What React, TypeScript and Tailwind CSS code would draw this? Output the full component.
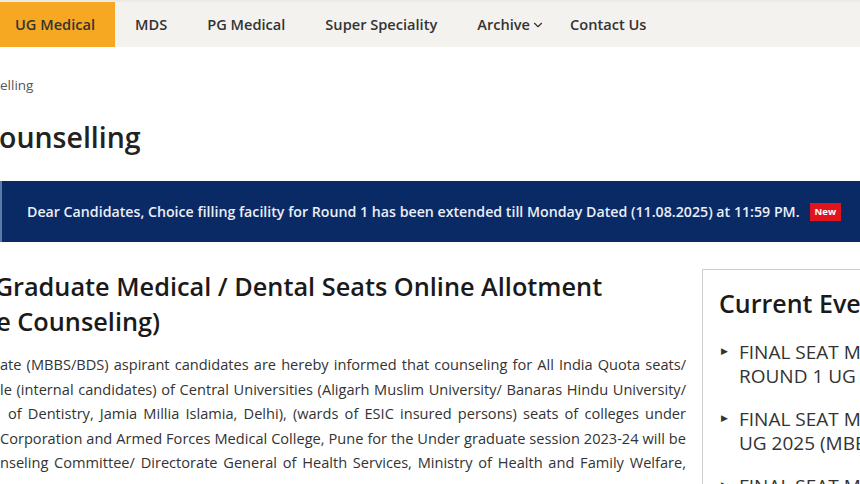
import React from 'react';
import { ChevronDown } from 'lucide-react';

const navItems = ['MDS', 'PG Medical', 'Super Speciality'];

const paraLines = [
  { text: 'ate (MBBS/BDS) aspirant candidates are hereby informed that counseling for All India Quota seats/', pad: '' },
  { text: 'le (internal candidates) of Central Universities (Aligarh Muslim University/ Banaras Hindu University/', pad: '' },
  { text: 'of Dentistry, Jamia Millia Islamia, Delhi), (wards of ESIC insured persons) seats of colleges under', pad: 'pl-[8px]' },
  { text: 'Corporation and Armed Forces Medical College, Pune for the Under graduate session 2023-24 will be', pad: '' },
  { text: 'nseling Committee/ Directorate General of Health Services, Ministry of Health and Family Welfare,', pad: '' },
];

const events = [
  ['FINAL SEAT MATRIX FOR', 'ROUND 1 UG 2025 (MBBS/BDS)'],
  ['FINAL SEAT MATRIX FOR ROUND 2', 'UG 2025 (MBBS/BDS)'],
  ['FINAL SEAT MATRIX FOR ROUND 3', 'UG 2025 (MBBS/BDS)'],
];

export default function App() {
  return (
    <div className="w-[860px] h-[484px] overflow-hidden bg-white font-['Open_Sans',sans-serif] text-[#333]">
      {/* Top navigation */}
      <div className="h-[2px] bg-[#eceae6]" />
      <nav className="flex h-[45px] items-stretch bg-[#f4f2ee] text-[14.6px] font-semibold text-[#333]">
        <a className="flex items-center bg-[#f7a823] pl-[15px] pr-5 whitespace-nowrap">UG Medical</a>
        {navItems.map((item) => (
          <a key={item} className="flex items-center px-5 whitespace-nowrap">{item}</a>
        ))}
        <a className="flex items-center gap-[1px] pl-5 pr-[5px] whitespace-nowrap">
          Archive <ChevronDown size={14} strokeWidth={2} className="mt-[1px]" />
        </a>
        <a className="flex items-center px-5 whitespace-nowrap">Contact Us</a>
      </nav>

      {/* Breadcrumb + title */}
      <div className="mt-[28px] text-[13.5px] leading-[20px] text-[#555] whitespace-nowrap">elling</div>
      <h1 className="mt-[24px] text-[28.5px] leading-[36px] font-semibold text-[#222] whitespace-nowrap -ml-[1px]">ounselling</h1>

      {/* Notice banner */}
      <div className="mt-[26px] flex h-[61px] items-center border-l-2 border-[#5d79a8] bg-[#0a2a66] pl-[25px] whitespace-nowrap">
        <span className="text-[14.2px] font-semibold text-[#e9eef7]">
          Dear Candidates, Choice filling facility for Round 1 has been extended till Monday Dated (11.08.2025) at 11:59 PM.
        </span>
        <span className="ml-[10px] bg-[#e0141c] px-[5px] py-[2px] text-[9.5px] font-bold leading-[14px] text-white">New</span>
      </div>

      {/* Main content */}
      <div className="mt-[27px] flex items-start">
        <div className="w-[686px] shrink-0">
          <h2 className="text-[25.3px] leading-[35px] font-semibold text-[#1a1a1a] whitespace-nowrap">
            <span className="block -ml-[88px]">Under Graduate Medical / Dental Seats Online Allotment</span>
            <span className="block -ml-[78px]">(Online Counseling)</span>
          </h2>
          <div className="mt-[13px] text-[14.6px] leading-[24.5px] text-[#333]">
            {paraLines.map((l) => (
              <div key={l.text} className={`text-justify [text-align-last:justify] whitespace-nowrap ${l.pad}`}>
                {l.text}
              </div>
            ))}
          </div>
        </div>

        <aside className="ml-[16px] w-[320px] shrink-0 border border-[#cfcfcf] pl-[16px] pt-[17px]">
          <h3 className="text-[25px] leading-[32px] font-semibold text-[#1a1a1a] whitespace-nowrap">Current Events</h3>
          <ul className="mt-[21px] flex flex-col gap-[19px] text-[19px] leading-[24px] text-[#333]">
            {events.map((ev) => (
              <li key={ev.join()} className="flex">
                <span className="w-[20px] shrink-0 pl-[2px] text-[9px] leading-[22px] text-[#333]">▶</span>
                <div className="whitespace-nowrap">
                  <div>{ev[0]}</div>
                  <div>{ev[1]}</div>
                </div>
              </li>
            ))}
          </ul>
        </aside>
      </div>
    </div>
  );
}
